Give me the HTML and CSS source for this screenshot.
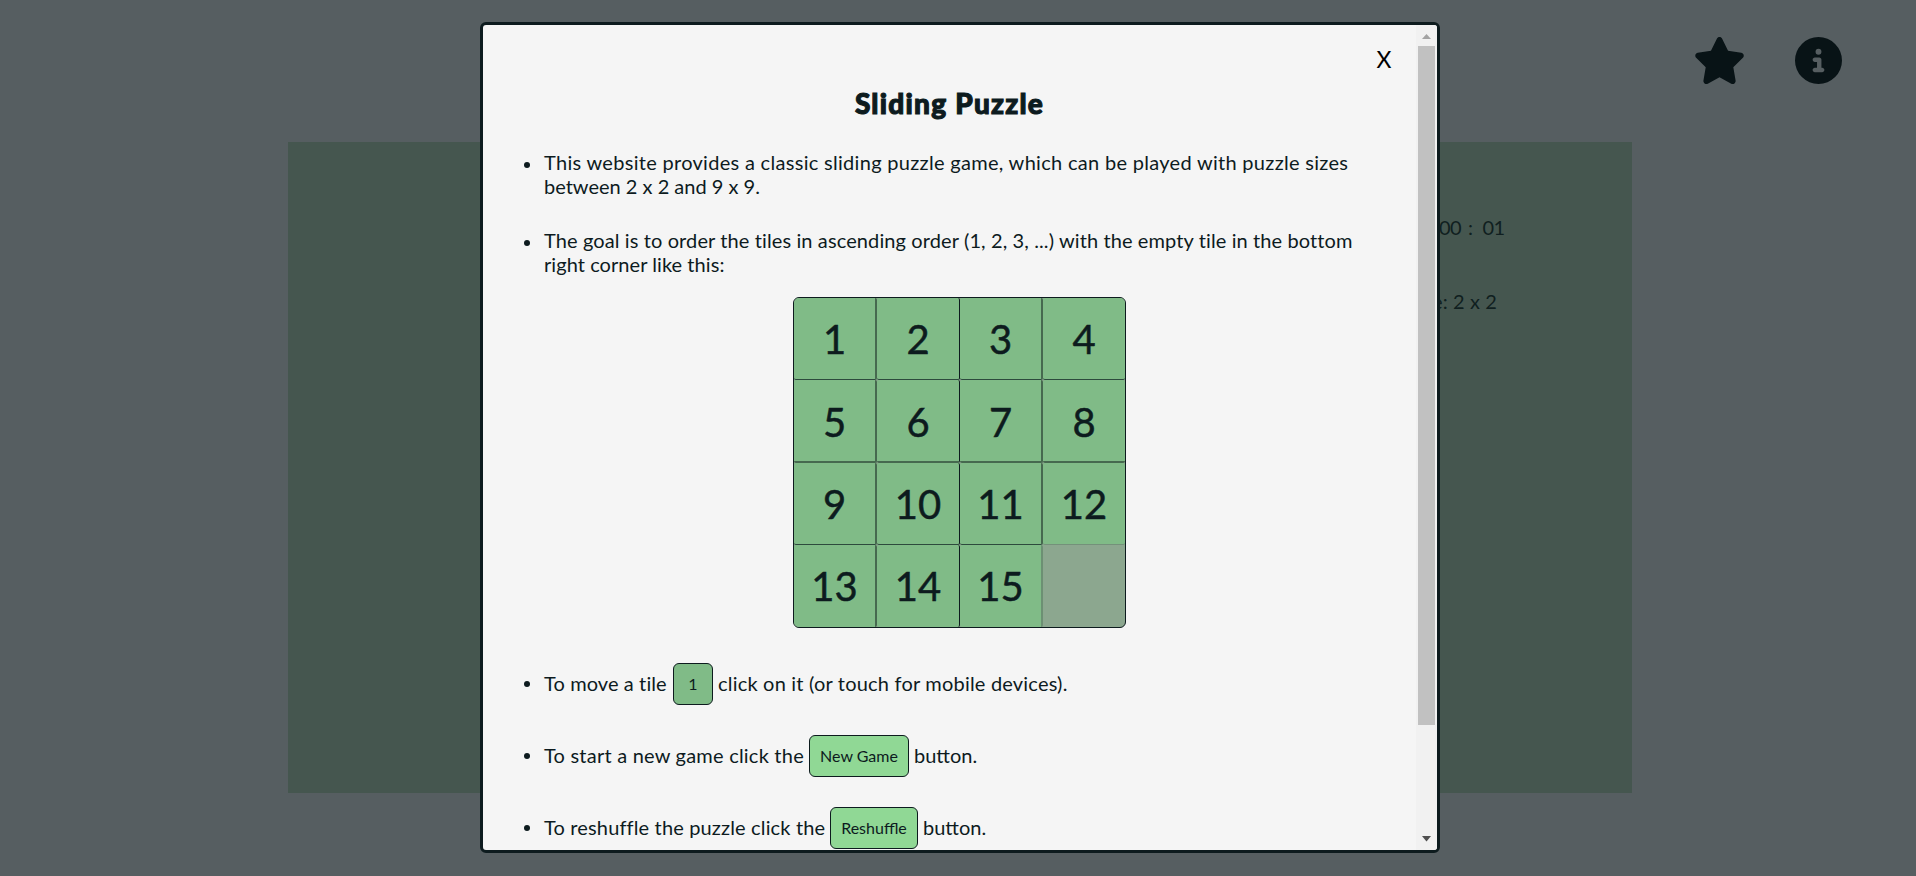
FILE: index.html
```html
<!DOCTYPE html>
<html lang="en">
<head>
<meta charset="utf-8">
<title>Sliding Puzzle</title>
<link rel="stylesheet" href="styles.css">
</head>
<body>
<div class="page">
  <header class="toolbar">
    <svg class="icon-star" viewBox="0 0 576 512"><path d="M316.9 18C311.6 7 300.4 0 288.1 0s-23.4 7-28.8 18L195 150.3 51.4 171.5c-12 1.8-22 10.2-25.7 21.7s-.7 24.2 7.9 32.7L137.8 329 113.2 474.7c-2 12 3 24.2 12.9 31.3s23 8 33.8 2.3l128.3-68.5 128.3 68.5c10.8 5.7 23.9 4.9 33.8-2.3s14.9-19.3 12.9-31.3L438.5 329 542.7 225.9c8.6-8.5 11.7-21.2 7.9-32.7s-13.7-19.9-25.7-21.7L381.2 150.3 316.9 18z"/></svg>
    <svg class="icon-info" viewBox="0 0 512 512"><path d="M256 512A256 256 0 1 0 256 0a256 256 0 1 0 0 512zM216 336h24V272H216c-13.3 0-24-10.7-24-24s10.7-24 24-24h48c13.3 0 24 10.7 24 24v88h8c13.3 0 24 10.7 24 24s-10.7 24-24 24H216c-13.3 0-24-10.7-24-24s10.7-24 24-24zm40-208a32 32 0 1 1 0 64 32 32 0 1 1 0-64z"/></svg>
  </header>
  <main class="board">
    <div class="stats">
      <div class="timer"><span>00</span><span class="colon">:</span><span>01</span></div>
      <div class="size">e: 2 x 2</div>
    </div>
  </main>
</div>
<div class="overlay">
  <section class="modal">
    <div class="content">
      <div class="close-row"><button class="close">X</button></div>
      <h1 class="title">Sliding Puzzle</h1>
      <ul class="rules">
        <li class="rule"><span class="line l1">This website provides a classic sliding puzzle game, which can be played with puzzle sizes</span><span class="line">between 2 x 2 and 9 x 9.</span></li>
        <li class="rule"><span class="line l3">The goal is to order the tiles in ascending order (1, 2, 3, ...) with the empty tile in the bottom</span><span class="line l4">right corner like this:</span></li>
      </ul>
      <div class="puzzle">
        <div class="tile">1</div><div class="tile">2</div><div class="tile">3</div><div class="tile">4</div>
        <div class="tile wide">5</div><div class="tile wide">6</div><div class="tile wide">7</div><div class="tile wide">8</div>
        <div class="tile">9</div><div class="tile">10</div><div class="tile">11</div><div class="tile above-gap">12</div>
        <div class="tile">13</div><div class="tile">14</div><div class="tile before-gap">15</div><div class="gap"></div>
      </div>
      <ul class="actions">
        <li class="action"><span class="lead w1">To move a tile</span><span class="chip chip-tile">1</span><span class="tail t1">click on it (or touch for mobile devices).</span></li>
        <li class="action"><span class="lead w2">To start a new game click the</span><span class="chip chip-new">New Game</span><span class="tail">button.</span></li>
        <li class="action"><span class="lead w3">To reshuffle the puzzle click the</span><span class="chip chip-shuffle">Reshuffle</span><span class="tail">button.</span></li>
      </ul>
    </div>
    <div class="scrollbar">
      <svg class="arrow" viewBox="0 0 21 21"><path d="M6 14h9L10.5 9z" fill="#a3a3a3"/></svg>
      <div class="thumb"></div>
      <svg class="arrow down" viewBox="0 0 21 21"><path d="M6 7h9l-4.500 5.500z" fill="#505050"/></svg>
    </div>
  </section>
</div>
</body>
</html>
```
FILE: styles.css
```css
* { box-sizing: border-box; }
body { margin: 0; height: 876px; overflow: hidden; background: #565e61; color: #0d1b1e; font: 20px/24px Lato, "Open Sans", sans-serif; }
.page { height: 876px; }
.toolbar { height: 142px; padding: 37px 74px 0 0; display: flex; justify-content: flex-end; gap: 49px; fill: #081316; }
.icon-star { width: 53px; height: 47px; }
.icon-info { width: 47px; height: 47px; }
.board { width: 1344px; height: 651px; margin: 0 0 0 288px; padding: 73px 0 0 1144px; background: #45564f; color: #101f20; }
.stats { white-space: nowrap; }
.timer { display: flex; padding-left: 7px; height: 74px; letter-spacing: -.6px; }
.colon { padding: 0 10px 0 7px; }
.size { letter-spacing: .1px; }
.overlay { position: absolute; inset: 0; padding: 22px 0 0 480px; }
.modal { width: 960px; height: 831px; display: flex; overflow: hidden; border: 3px solid #0d1b1e; border-radius: 6px; background: #f5f5f5; }
.content { width: 933px; height: 825px; overflow: hidden; }
.close-row { display: flex; justify-content: flex-end; padding: 22px 22px 0 0; height: 60px; }
.close { width: 20px; height: 24px; padding: 0; border: 0; background: none; color: #000; font: 23px/24px Lato, sans-serif; }
.title { margin: 0; padding-top: 2px; height: 64px; text-align: center; font-size: 28px; line-height: 32px; font-weight: 900; letter-spacing: 1.25px; -webkit-text-stroke: 1.1px #0d1b1e; }
.rules, .actions { list-style: none; margin: 0; padding: 0 0 0 61px; }
.rules { height: 148px; padding-top: 1px; }
.rule { height: 78px; position: relative; }
.rule::before, .action::before { content: ""; position: absolute; left: -20px; width: 6px; height: 6px; border-radius: 50%; background: #0d1b1e; }
.rule::before { top: 12px; }
.line { display: block; height: 24px; white-space: nowrap; }
.l1 { letter-spacing: .3px; }
.l3 { letter-spacing: .11px; }
.l4 { letter-spacing: .06px; }
.puzzle { width: 333px; height: 331px; margin: 0 0 35px 310px; display: grid; grid-template: 82px 83px 82px 82px / 83px 83px 83px 82px; border: 1px solid #0d1b1e; border-radius: 6px; overflow: hidden; background: #8ca78f; }
.tile { display: flex; align-items: center; justify-content: center; background: #80bb87; border: 0 solid #46694f; border-bottom: 1px solid #2d4a3d; border-radius: 2px; font-size: 40px; line-height: 48px; font-weight: 400; -webkit-text-stroke: .5px #0d1b1e; }
.tile:nth-child(4n+1), .tile:nth-child(4n+3) { border-right-width: 2px; }
.tile:nth-child(4n+2) { border-right: 1px solid #0d1b1e; }
.tile:nth-child(n+13) { border-bottom: 0; }
.tile.wide { border-bottom: 2px solid #46694f; padding-top: 2px; }
.tile.above-gap { border-bottom-color: #74917a; }
.tile.before-gap { border-right-color: #6c9073; }
.action { height: 42px; margin-bottom: 30px; display: flex; align-items: center; position: relative; white-space: nowrap; }
.action::before { top: 18px; }
.lead { flex: none; padding-bottom: 2px; }
.w1 { width: 129px; letter-spacing: .1px; }
.w2 { width: 265px; letter-spacing: .22px; }
.w3 { width: 286px; letter-spacing: .15px; }
.chip { flex: none; height: 42px; border: 1px solid #0d1b1e; border-radius: 6px; display: flex; align-items: center; justify-content: center; background: #90d895; font-size: 16px; }
.chip-tile { width: 40px; background: #80bb87; }
.chip-new { width: 100px; }
.chip-shuffle { width: 88px; }
.tail { padding: 0 0 2px 5px; }
.t1 { letter-spacing: .2px; }
.scrollbar { width: 21px; background: #f1f1f1; display: flex; flex-direction: column; }
.arrow { width: 21px; height: 21px; flex: none; }
.down { margin-top: auto; }
.thumb { width: 17px; height: 679px; margin-left: 2px; background: #c1c1c1; }
```
